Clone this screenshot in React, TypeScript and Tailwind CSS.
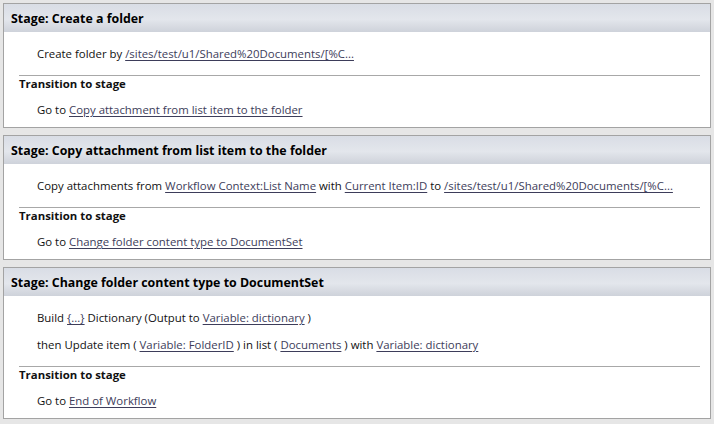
import type { ReactNode } from 'react'

function Link({ children }: { children: ReactNode }) {
  return <span className="text-[#3d3d5a] underline underline-offset-[2px] decoration-[#3d3d5a]">{children}</span>
}

function Row({ children, indent = true }: { children: ReactNode; indent?: boolean }) {
  return (
    <div className={`h-[16px] leading-[16px] whitespace-nowrap ${indent ? 'pl-[33px]' : 'pl-[15px]'}`}>
      {children}
    </div>
  )
}

function Stage({ title, actions, target }: { title: string; actions: ReactNode[]; target: string }) {
  return (
    <div className="border border-[#a3a3a3] bg-white">
      <div className="h-[28px] flex items-center pl-[7px] pt-[2px] font-bold text-[12.4px] text-black bg-[linear-gradient(to_bottom,#d9dde5_0%,#e3e6ec_55%,#ced2da_100%)]">
        {title}
      </div>
      <div className="pt-[14px] pb-[9px]">
        <div className="flex flex-col gap-[11px]">
          {actions.map((a, i) => (
            <Row key={i}>{a}</Row>
          ))}
        </div>
        <div className="mt-[13px] ml-[15px] mr-[10px] h-px bg-[#a8a8a8]" />
        <Row indent={false}>
          <span className="font-bold">Transition to stage</span>
        </Row>
        <div className="mt-[10px]">
          <Row>
            Go to <Link>{target}</Link>
          </Row>
        </div>
      </div>
    </div>
  )
}

export default function App() {
  return (
    <div
      className="w-[714px] h-[424px] bg-[#e6e6e6] pt-[3px] pl-[3px] pr-[3px] flex flex-col gap-[7px] text-[11.4px] text-[#111]"
      style={{ fontFamily: '"Segoe UI", "Open Sans", sans-serif' }}
    >
      <Stage
        title="Stage: Create a folder"
        actions={[
          <>
            Create folder by <Link>/sites/test/u1/Shared%20Documents/[%C...</Link>
          </>,
        ]}
        target="Copy attachment from list item to the folder"
      />
      <Stage
        title="Stage: Copy attachment from list item to the folder"
        actions={[
          <>
            Copy attachments from <Link>Workflow Context:List Name</Link> with <Link>Current Item:ID</Link> to{' '}
            <Link>/sites/test/u1/Shared%20Documents/[%C...</Link>
          </>,
        ]}
        target="Change folder content type to DocumentSet"
      />
      <Stage
        title="Stage: Change folder content type to DocumentSet"
        actions={[
          <>
            Build <Link>{'{...}'}</Link> Dictionary (Output to <Link>Variable: dictionary</Link> )
          </>,
          <>
            then Update item ( <Link>Variable: FolderID</Link> ) in list ( <Link>Documents</Link> ) with{' '}
            <Link>Variable: dictionary</Link>
          </>,
        ]}
        target="End of Workflow"
      />
    </div>
  )
}
